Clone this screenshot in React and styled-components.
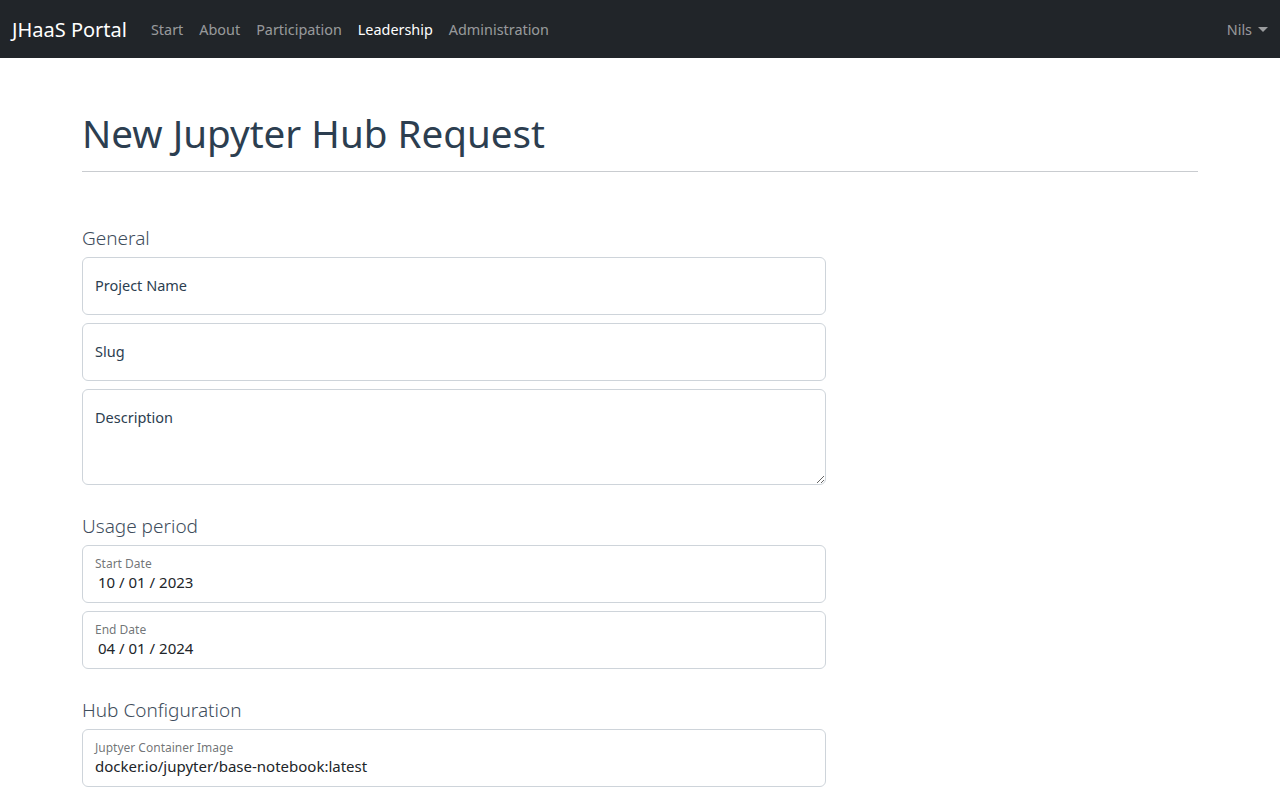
import React from "react";
import styled, { createGlobalStyle } from "styled-components";

const Global = createGlobalStyle`
  * { box-sizing: border-box; }
  body {
    margin: 0;
    font-family: "Noto Sans", "Open Sans", sans-serif;
    color: #212529;
    background: #fff;
  }
`;

const NavBar = styled.nav`
  height: 58px;
  background: #212529;
  display: flex;
  align-items: center;
  padding: 0 12px;
`;

const Brand = styled.a`
  color: #fff;
  font-size: 20px;
  text-decoration: none;
  margin-right: 16px;
`;

const NavLinks = styled.div`
  display: flex;
  flex: 1;
`;

const NavLink = styled.a`
  color: ${(p) => (p.$active ? "#fff" : "rgba(255,255,255,.55)")};
  font-size: 14.4px;
  padding: 8px;
  text-decoration: none;
`;

const UserMenu = styled.a`
  color: rgba(255, 255, 255, 0.55);
  font-size: 14.4px;
  display: flex;
  align-items: center;
  gap: 6px;
  &::after {
    content: "";
    border-top: 5px solid rgba(255, 255, 255, 0.55);
    border-left: 5px solid transparent;
    border-right: 5px solid transparent;
  }
`;

const Container = styled.main`
  width: 1140px;
  margin: 0 auto;
  padding: 0 12px;
`;

const Title = styled.h1`
  font-size: 38.6px;
  font-weight: 400;
  color: #2c3e50;
  margin: 52px 0 0;
  padding-bottom: 15px;
  border-bottom: 1px solid #c9ccd0;
  line-height: 1.2;
`;

const Form = styled.form`
  width: 744px;
  padding-top: 55px;
`;

const Section = styled.h4`
  font-size: 19px;
  font-weight: 300;
  color: #3e4d5c;
  margin: 0 0 7px;
  line-height: 1.2;
`;

const Field = styled.div`
  position: relative;
  margin-bottom: 8px;
`;

const Input = styled.input`
  display: block;
  width: 100%;
  height: 58px;
  border: 1px solid #ced4da;
  border-radius: 6px;
  padding: ${(p) => (p.$filled ? "24px 12px 8px" : "16px 12px")};
  padding-left: ${(p) => (p.$indent ? "15px" : "12px")};
  font-family: inherit;
  font-size: 15px;
  color: #212529;
  &::placeholder { color: transparent; }
`;

const TextArea = styled.textarea`
  display: block;
  width: 100%;
  height: 96px;
  border: 1px solid #ced4da;
  border-radius: 6px;
  padding: 16px 12px;
  font-family: inherit;
  font-size: 15px;
  resize: vertical;
  &::placeholder { color: transparent; }
`;

const Label = styled.label`
  position: absolute;
  left: 13px;
  top: ${(p) => (p.$small ? "10px" : "18px")};
  font-size: ${(p) => (p.$small ? "12px" : "14.5px")};
  color: ${(p) => (p.$small ? "rgba(33,37,41,.65)" : "#2c3e50")};
  pointer-events: none;
`;

const Group = styled.div`
  margin-bottom: 30px;
`;

function Floating({ label, value, area, indent }) {
  return (
    <Field>
      {area ? (
        <TextArea placeholder={label} />
      ) : (
        <Input $filled={!!value} $indent={indent} defaultValue={value} placeholder={label} />
      )}
      <Label $small={!!value}>{label}</Label>
    </Field>
  );
}

export default function App() {
  return (
    <>
      <Global />
      <NavBar>
        <Brand href="#">JHaaS Portal</Brand>
        <NavLinks>
          <NavLink href="#">Start</NavLink>
          <NavLink href="#">About</NavLink>
          <NavLink href="#">Participation</NavLink>
          <NavLink href="#" $active>Leadership</NavLink>
          <NavLink href="#">Administration</NavLink>
        </NavLinks>
        <UserMenu>Nils</UserMenu>
      </NavBar>
      <Container>
        <Title>New Jupyter Hub Request</Title>
        <Form>
          <Group>
            <Section>General</Section>
            <Floating label="Project Name" />
            <Floating label="Slug" />
            <Floating label="Description" area />
          </Group>
          <Group>
            <Section>Usage period</Section>
            <Floating label="Start Date" value="10 / 01 / 2023" indent />
            <Floating label="End Date" value="04 / 01 / 2024" indent />
          </Group>
          <Group>
            <Section>Hub Configuration</Section>
            <Floating label="Juptyer Container Image" value="docker.io/jupyter/base-notebook:latest" />
          </Group>
        </Form>
      </Container>
    </>
  );
}
